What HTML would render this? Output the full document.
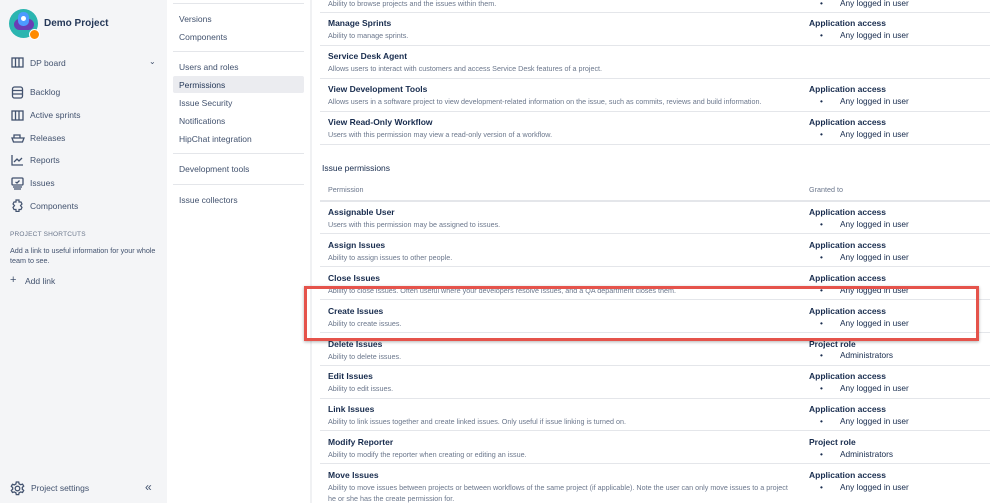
<!DOCTYPE html>
<html><head><meta charset="utf-8"><style>
*{margin:0;padding:0;box-sizing:border-box}
body{width:999px;height:503px;overflow:hidden;background:#fff;font-family:"Liberation Sans",sans-serif;position:relative;color:#172b4d}
.a{position:absolute;white-space:nowrap}
#side{position:absolute;left:0;top:0;width:167px;height:503px;background:#f4f5f7}
.nav{font-size:8.5px;color:#42526e}
.nv{font-size:8.5px;color:#42526e}
.t{font-size:8.5px;font-weight:bold;color:#172b4d}
.d{font-size:7.2px;color:#6b778c}
.ln{position:absolute;height:1px;background:#e4e6ea}
.g{font-size:8.5px;font-weight:bold;color:#172b4d}
.b{font-size:8.3px;color:#172b4d}
.b::before{content:"•";position:absolute;left:-20px}
svg{position:absolute}
</style></head><body>
<div id="side"></div>
<div class="a" style="left:9px;top:9px;width:29px;height:29px;border-radius:50%;background:#2bb5b0"></div>
<div class="a" style="left:14px;top:19px;width:20px;height:11px;border-radius:6px;background:#6a3db5"></div>
<div class="a" style="left:18px;top:12px;width:11px;height:14px;border-radius:5px;background:#4c9aff"></div>
<div class="a" style="left:21px;top:16px;width:5px;height:5px;border-radius:50%;background:#fff"></div>
<div class="a" style="left:29px;top:29px;width:11px;height:11px;border-radius:50%;background:#ff8b00;border:1px solid #fff"></div>
<div class="a" style="left:44px;top:18px;font-size:10px;font-weight:bold;color:#253858">Demo Project</div>
<svg style="left:11px;top:57px" width="13" height="11" viewBox="0 0 13 11" fill="none" stroke="#42526e" stroke-width="1.3"><rect x="1" y="1" width="11" height="9"/><path d="M4.5 1v9M8 1v9"/></svg>
<div class="a nav" style="left:30px;top:58px">DP board</div>
<div class="a" style="left:149px;top:57px;font-size:8px;color:#42526e">⌄</div>
<svg style="left:11px;top:86px" width="13" height="13" viewBox="0 0 13 13" fill="none" stroke="#42526e" stroke-width="1.3"><rect x="1.5" y="1" width="10" height="11" rx="2"/><path d="M1.5 4.5h10M1.5 8h10"/></svg>
<div class="a nav" style="left:30px;top:87px">Backlog</div>
<svg style="left:11px;top:110px" width="13" height="11" viewBox="0 0 13 11" fill="none" stroke="#42526e" stroke-width="1.3"><rect x="1" y="1" width="11" height="9"/><path d="M4.5 1v9M8 1v9"/></svg>
<div class="a nav" style="left:30px;top:110px">Active sprints</div>
<svg style="left:11px;top:132px" width="14" height="11" viewBox="0 0 14 11" fill="none" stroke="#42526e" stroke-width="1.3"><path d="M1 6h12l-1.5 4h-9zM3 6V3h6v3"/></svg>
<div class="a nav" style="left:30px;top:133px">Releases</div>
<svg style="left:11px;top:154px" width="13" height="12" viewBox="0 0 13 12" fill="none" stroke="#42526e" stroke-width="1.3"><path d="M1 1v10h11M3 8l3-3 2 2 3-3"/></svg>
<div class="a nav" style="left:30px;top:155px">Reports</div>
<svg style="left:11px;top:177px" width="13" height="13" viewBox="0 0 13 13" fill="none" stroke="#42526e" stroke-width="1.3"><rect x="1" y="1" width="11" height="7" rx="1"/><path d="M2 10h9M3 12h7M4.5 5l1.5 1 2.5-2.5"/></svg>
<div class="a nav" style="left:30px;top:178px">Issues</div>
<svg style="left:11px;top:199px" width="13" height="13" viewBox="0 0 13 13" fill="none" stroke="#42526e" stroke-width="1.2"><path d="M5 1h3v2h2l1 2-1.5 1.5 1.5 2-1 2H8v2H5v-2H3L2 8.5 3.5 6.5 2 5l1-2h2z"/></svg>
<div class="a nav" style="left:30px;top:201px">Components</div>
<div class="a" style="left:10px;top:231px;font-size:6.5px;color:#6b778c;letter-spacing:.2px">PROJECT SHORTCUTS</div>
<div class="a" style="left:10px;top:246px;font-size:7.2px;color:#42526e;line-height:10px;white-space:normal;width:155px">Add a link to useful information for your whole team to see.</div>
<div class="a nav" style="left:10px;top:274px;font-size:11px">+</div>
<div class="a nav" style="left:25px;top:276px">Add link</div>
<svg style="left:10px;top:481px" width="15" height="15" viewBox="0 0 15 15" fill="none" stroke="#42526e" stroke-width="1.3"><circle cx="7.5" cy="7.5" r="2.3"/><path d="M6.3 1h2.4l.4 1.8 1.6.9 1.8-.6 1.2 2-1.4 1.3v1.8l1.4 1.3-1.2 2-1.8-.6-1.6.9-.4 1.8H6.3l-.4-1.8-1.6-.9-1.8.6-1.2-2 1.4-1.3V6.6L1.3 5.3l1.2-2 1.8.6 1.6-.9z"/></svg>
<div class="a nav" style="left:31px;top:483px">Project settings</div>
<div class="a" style="left:145px;top:480px;font-size:12px;color:#42526e">«</div>
<div class="ln" style="left:173px;top:3px;width:131px"></div>
<div class="a nv" style="left:179px;top:14px">Versions</div>
<div class="a nv" style="left:179px;top:32px">Components</div>
<div class="ln" style="left:173px;top:51px;width:131px"></div>
<div class="a nv" style="left:179px;top:62px">Users and roles</div>
<div class="a" style="left:173px;top:76px;width:131px;height:17px;background:#ebecf0;border-radius:2px"></div>
<div class="a nv" style="left:179px;top:80px;color:#253858">Permissions</div>
<div class="a nv" style="left:179px;top:98px">Issue Security</div>
<div class="a nv" style="left:179px;top:116px">Notifications</div>
<div class="a nv" style="left:179px;top:134px">HipChat integration</div>
<div class="ln" style="left:173px;top:153px;width:131px"></div>
<div class="a nv" style="left:179px;top:164px">Development tools</div>
<div class="ln" style="left:173px;top:184px;width:131px"></div>
<div class="a nv" style="left:179px;top:195px">Issue collectors</div>
<div class="a" style="left:310px;top:0;width:2px;height:503px;background:#f0f1f3"></div>

<div class="a d" style="left:328px;top:-1px">Ability to browse projects and the issues within them.</div>
<div class="a b" style="left:840px;top:-2px">Any logged in user</div>
<div class="ln" style="left:320px;top:12px;width:670px"></div>

<div class="a t" style="left:328px;top:18px">Manage Sprints</div><div class="a d" style="left:328px;top:31px">Ability to manage sprints.</div>
<div class="a g" style="left:809px;top:18px">Application access</div><div class="a b" style="left:840px;top:30px">Any logged in user</div>
<div class="ln" style="left:320px;top:45px;width:670px"></div>

<div class="a t" style="left:328px;top:51px">Service Desk Agent</div><div class="a d" style="left:328px;top:64px">Allows users to interact with customers and access Service Desk features of a project.</div>
<div class="ln" style="left:320px;top:78px;width:670px"></div>

<div class="a t" style="left:328px;top:84px">View Development Tools</div><div class="a d" style="left:328px;top:97px">Allows users in a software project to view development-related information on the issue, such as commits, reviews and build information.</div>
<div class="a g" style="left:809px;top:84px">Application access</div><div class="a b" style="left:840px;top:96px">Any logged in user</div>
<div class="ln" style="left:320px;top:111px;width:670px"></div>

<div class="a t" style="left:328px;top:117px">View Read-Only Workflow</div><div class="a d" style="left:328px;top:130px">Users with this permission may view a read-only version of a workflow.</div>
<div class="a g" style="left:809px;top:117px">Application access</div><div class="a b" style="left:840px;top:129px">Any logged in user</div>
<div class="ln" style="left:320px;top:144px;width:670px"></div>

<div class="a" style="left:322px;top:163px;font-size:8.5px;color:#172b4d">Issue permissions</div>
<div class="a d" style="left:328px;top:185px">Permission</div><div class="a d" style="left:809px;top:185px">Granted to</div>
<div class="ln" style="left:320px;top:200px;width:670px;height:2px"></div>

<div class="a t" style="left:328px;top:207px">Assignable User</div><div class="a d" style="left:328px;top:220px">Users with this permission may be assigned to issues.</div>
<div class="a g" style="left:809px;top:207px">Application access</div><div class="a b" style="left:840px;top:219px">Any logged in user</div>
<div class="ln" style="left:320px;top:233px;width:670px"></div>

<div class="a t" style="left:328px;top:240px">Assign Issues</div><div class="a d" style="left:328px;top:253px">Ability to assign issues to other people.</div>
<div class="a g" style="left:809px;top:240px">Application access</div><div class="a b" style="left:840px;top:252px">Any logged in user</div>
<div class="ln" style="left:320px;top:266px;width:670px"></div>

<div class="a t" style="left:328px;top:273px">Close Issues</div><div class="a d" style="left:328px;top:286px">Ability to close issues. Often useful where your developers resolve issues, and a QA department closes them.</div>
<div class="a g" style="left:809px;top:273px">Application access</div><div class="a b" style="left:840px;top:285px">Any logged in user</div>
<div class="ln" style="left:320px;top:299px;width:670px"></div>

<div class="a t" style="left:328px;top:306px">Create Issues</div><div class="a d" style="left:328px;top:319px">Ability to create issues.</div>
<div class="a g" style="left:809px;top:306px">Application access</div><div class="a b" style="left:840px;top:318px">Any logged in user</div>
<div class="ln" style="left:320px;top:332px;width:670px"></div>

<div class="a t" style="left:328px;top:339px">Delete Issues</div><div class="a d" style="left:328px;top:352px">Ability to delete issues.</div>
<div class="a g" style="left:809px;top:339px">Project role</div><div class="a b" style="left:840px;top:350px">Administrators</div>
<div class="ln" style="left:320px;top:365px;width:670px"></div>

<div class="a t" style="left:328px;top:371px">Edit Issues</div><div class="a d" style="left:328px;top:384px">Ability to edit issues.</div>
<div class="a g" style="left:809px;top:371px">Application access</div><div class="a b" style="left:840px;top:383px">Any logged in user</div>
<div class="ln" style="left:320px;top:398px;width:670px"></div>

<div class="a t" style="left:328px;top:404px">Link Issues</div><div class="a d" style="left:328px;top:417px">Ability to link issues together and create linked issues. Only useful if issue linking is turned on.</div>
<div class="a g" style="left:809px;top:404px">Application access</div><div class="a b" style="left:840px;top:416px">Any logged in user</div>
<div class="ln" style="left:320px;top:430px;width:670px"></div>

<div class="a t" style="left:328px;top:437px">Modify Reporter</div><div class="a d" style="left:328px;top:450px">Ability to modify the reporter when creating or editing an issue.</div>
<div class="a g" style="left:809px;top:437px">Project role</div><div class="a b" style="left:840px;top:449px">Administrators</div>
<div class="ln" style="left:320px;top:463px;width:670px"></div>

<div class="a t" style="left:328px;top:470px">Move Issues</div><div class="a d" style="left:328px;top:482px;line-height:11px">Ability to move issues between projects or between workflows of the same project (if applicable). Note the user can only move issues to a project<br>he or she has the create permission for.</div>
<div class="a g" style="left:809px;top:470px">Application access</div><div class="a b" style="left:840px;top:482px">Any logged in user</div>

<div class="a" style="left:304px;top:286px;width:675px;height:55px;border:3px solid #e5534b;box-shadow:0 1px 3px rgba(0,0,0,.3)"></div>
</body></html>
